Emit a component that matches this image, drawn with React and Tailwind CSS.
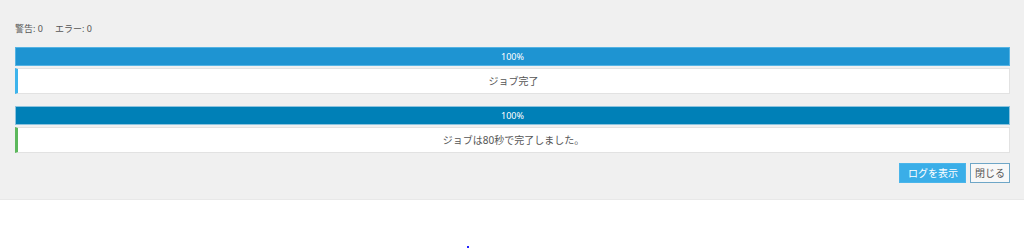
const font = { fontFamily: '"Noto Sans", "Noto Sans CJK JP", sans-serif' }

function JobBlock({ barColor, barBorder, accent, message }) {
  return (
    <div className="flex flex-col gap-[2px]">
      <div
        className={`h-[19px] border ${barBorder} ${barColor} flex items-center justify-center text-[9px] text-white`}
      >
        100%
      </div>
      <div
        className={`h-[26px] bg-white border border-[#e2e2e2] border-l-[3px] ${accent} flex items-center justify-center text-[10px] text-[#555]`}
      >
        {message}
      </div>
    </div>
  )
}

export default function App() {
  return (
    <div className="w-[1024px] h-[249px] bg-white" style={font}>
      <div className="h-[200px] bg-[#f0f0f0] px-[15px] pt-[22px] border-b border-[#e8e8e8]">
        <div className="text-[9px] text-[#555] h-[14px] leading-[14px] flex gap-[12px]">
          <span>警告: 0</span>
          <span>エラー: 0</span>
        </div>
        <div className="mt-[11px] flex flex-col gap-[12px] w-[995px]">
          <JobBlock
            barColor="bg-[#1e94d2]"
            barBorder="border-[#55b3e3]"
            accent="border-l-[#3db4ec]"
            message="ジョブ完了"
          />
          <JobBlock
            barColor="bg-[#0080b7]"
            barBorder="border-[#8cc3de]"
            accent="border-l-[#5cb85c]"
            message="ジョブは80秒で完了しました。"
          />
        </div>
        <div className="mt-[10px] w-[995px] flex justify-end gap-[4px]">
          <button className="h-[20px] w-[67px] bg-[#3aaee8] text-white text-[10px] border border-[#4ab5ea] text-left pl-[8px]">
            ログを表示
          </button>
          <button className="h-[20px] w-[40px] bg-[#f8f8f8] text-[#555] text-[10px] border border-[#6ea6c7]">
            閉じる
          </button>
        </div>
      </div>
      <div className="ml-[467px] mt-[46px] w-[2px] h-[2px] bg-[#2020ff]" />
    </div>
  )
}
